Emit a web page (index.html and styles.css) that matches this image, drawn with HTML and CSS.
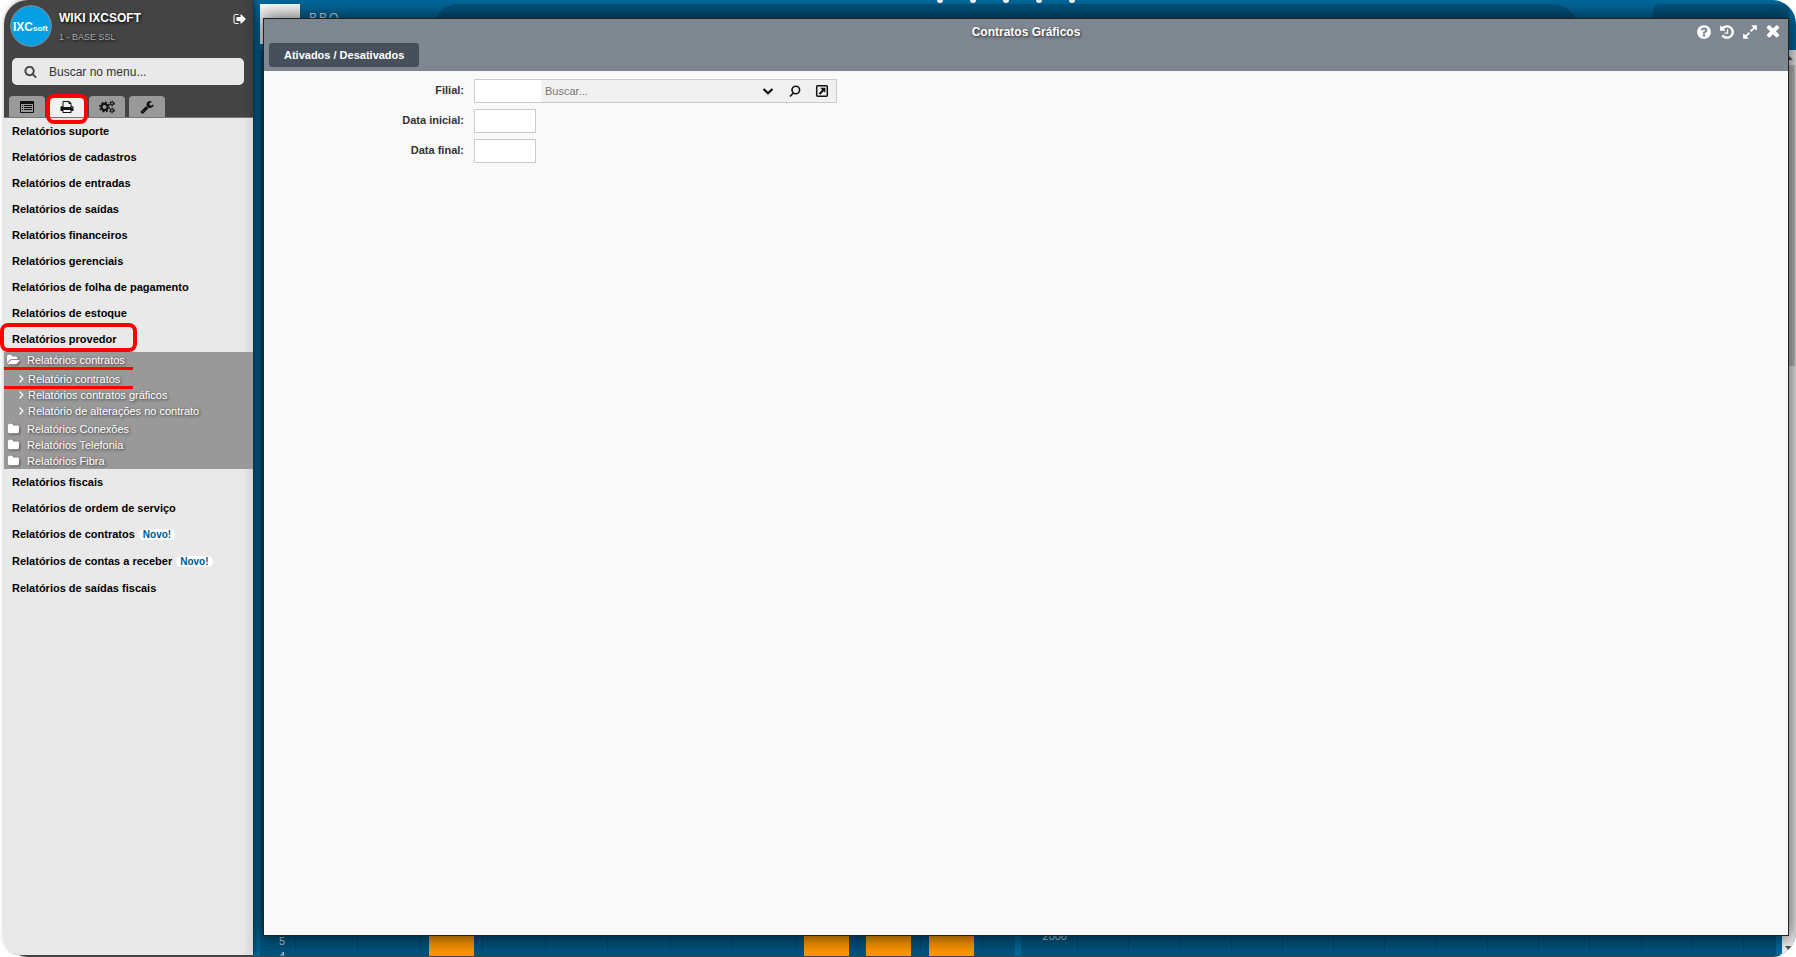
FILE: index.html
```
<!DOCTYPE html>
<html lang="pt-BR">
<head>
<meta charset="utf-8">
<title>Contratos Gráficos</title>
<link rel="stylesheet" href="styles.css">
</head>
<body>
<svg class="defs" aria-hidden="true">
  <symbol id="folder" viewBox="0 0 1792 1792"><path d="M1728 608v704q0 92-66 158t-158 66h-1216q-92 0-158-66t-66-158v-960q0-92 66-158t158-66h320q92 0 158 66t66 158v32h672q92 0 158 66t66 158z"/></symbol>
  <symbol id="angle" viewBox="0 0 8 12"><path d="M2.500 2.500l3.300 3.500-3.300 3.500" fill="none" stroke="currentColor" stroke-width="1.200"/></symbol>
</svg>
<div class="app">
  <aside class="sidebar">
    <header class="side-head">
      <div class="user">
        <svg class="logo" viewBox="0 0 42 42" role="img" aria-label="IXCsoft"><circle cx="21" cy="21" r="20.3" fill="#079fe4" stroke="#8a8f92"/><text x="3" y="25.5" class="logo-big">IXC</text><text x="23" y="26" class="logo-small">soft</text></svg>
        <div class="who"><strong>WIKI IXCSOFT</strong><span>1 - BASE SSL</span></div>
        <button class="icon-btn exit" aria-label="Sair"><svg viewBox="0 0 1792 1792"><path d="M704 1440q0 4 1 20t.5 26.5-3 23.5-10 19.5-20.5 6.5h-320q-119 0-203.5-84.5t-84.5-203.5v-704q0-119 84.5-203.5t203.5-84.5h320q13 0 22.5 9.5t9.5 22.5q0 4 1 20t.5 26.5-3 23.5-10 19.5-20.5 6.5h-320q-66 0-113 47t-47 113v704q0 66 47 113t113 47h312l11.5 1 11.5 3 8 5.5 7 9 2 13.5zm928-544q0 26-19 45l-544 544q-19 19-45 19t-45-19-19-45v-288h-448q-26 0-45-19t-19-45v-384q0-26 19-45t45-19h448v-288q0-26 19-45t45-19 45 19l544 544q19 19 19 45z"/></svg></button>
      </div>
      <label class="search">
        <svg viewBox="0 0 1792 1792" aria-hidden="true"><path d="M1216 832q0-185-131.5-316.5t-316.5-131.5-316.5 131.5-131.5 316.5 131.5 316.5 316.5 131.5 316.5-131.5 131.5-316.5zm512 832q0 52-38 90t-90 38q-54 0-90-38l-343-342q-179 124-399 124-143 0-273.5-55.5t-225-150-150-225-55.5-273.5 55.5-273.5 150-225 225-150 273.5-55.5 273.5 55.5 225 150 150 225 55.5 273.5q0 220-124 399l343 343q37 37 37 90z"/></svg>
        <input type="text" placeholder="Buscar no menu..." aria-label="Buscar no menu">
      </label>
      <nav class="tabs">
        <button aria-label="Menu"><svg viewBox="0 0 14 14"><path fill-rule="evenodd" d="M1 1h12a1 1 0 011 1v10a1 1 0 01-1 1H1a1 1 0 01-1-1V2a1 1 0 011-1zm0 3v8h12V4zM2 5h1v1H2zm2 0h8v1H4zM2 7h1v1H2zm2 0h8v1H4zM2 9h1v1H2zm2 0h8v1H4z"/></svg></button>
        <button class="active marked" aria-label="Relatórios"><svg viewBox="0 0 1792 1792"><path d="M448 1536h896v-256h-896v256zm0-640h896v-384h-160q-40 0-68-28t-28-68v-160h-640v640zm1152 64q0-26-19-45t-45-19-45 19-19 45 19 45 45 19 45-19 19-45zm128 0v416q0 13-9.500 22.500t-22.500 9.500h-224v160q0 40-28 68t-68 28h-960q-40 0-68-28t-28-68v-160h-224q-13 0-22.500-9.500t-9.500-22.500v-416q0-79 56.500-135.500t135.500-56.500h64v-544q0-40 28-68t68-28h672q40 0 88 20t76 48l152 152q28 28 48 76t20 88v256h64q79 0 135.500 56.500t56.500 135.500z"/></svg></button>
        <button aria-label="Configurações"><svg class="cogs" viewBox="0 0 16 14"><g fill="none" stroke="currentColor"><circle cx="5.500" cy="7" r="3.100" stroke-width="2.200"/><circle cx="5.500" cy="7" r="4.700" stroke-width="1.500" stroke-dasharray="1.850 1.840"/><circle cx="13" cy="3.500" r="1.500" stroke-width="1.200"/><circle cx="13" cy="3.500" r="2.400" stroke-dasharray="1.260 1.250"/><circle cx="13" cy="10.500" r="1.500" stroke-width="1.200"/><circle cx="13" cy="10.500" r="2.400" stroke-dasharray="1.260 1.250"/></g></svg></button>
        <button aria-label="Ferramentas"><svg viewBox="0 0 1792 1792"><path d="M448 1472q0-26-19-45t-45-19-45 19-19 45 19 45 45 19 45-19 19-45zm644-420l-682 682q-37 37-90 37-52 0-91-37l-106-108q-38-36-38-90 0-53 38-91l681-681q39 98 114.500 173.500t173.500 114.500zm634-435q0 39-23 106-47 134-164.500 217.500t-258.500 83.500q-185 0-316.500-131.500t-131.500-316.500 131.500-316.500 316.500-131.500q58 0 121.500 16.500t107.500 46.500q16 11 16 28t-16 28l-293 169v224l193 107q5-3 79-48.500t135.500-81 70.500-35.500q15 0 23.500 10t8.500 25z"/></svg></button>
      </nav>
    </header>
    <ul class="menu">
      <li><a href="#">Relatórios suporte</a></li>
      <li><a href="#">Relatórios de cadastros</a></li>
      <li><a href="#">Relatórios de entradas</a></li>
      <li><a href="#">Relatórios de saídas</a></li>
      <li><a href="#">Relatórios financeiros</a></li>
      <li><a href="#">Relatórios gerenciais</a></li>
      <li><a href="#">Relatórios de folha de pagamento</a></li>
      <li><a href="#">Relatórios de estoque</a></li>
      <li><a href="#" class="boxed">Relatórios provedor</a>
        <ul class="submenu">
          <li><a href="#" class="folder underlined"><svg viewBox="0 0 1792 1792"><path d="M1815 952q0 31-31 66l-336 396q-43 51-120.500 86.500t-143.500 35.500h-1088q-34 0-60.500-13t-26.500-43q0-31 31-66l336-396q43-51 120.500-86.500t143.500-35.500h1088q34 0 60.500 13t26.500 43zm-343-344v160h-832q-94 0-197 47.500t-164 119.500l-337 396-5 6q0-4-.5-12.500t-.5-12.500v-960q0-92 66-158t158-66h320q92 0 158 66t66 158v32h544q92 0 158 66t66 158z"/></svg>Relatórios contratos</a>
            <ul class="leafs">
              <li><a href="#" class="leaf underlined"><svg><use href="#angle"/></svg>Relatório contratos</a></li>
              <li><a href="#" class="leaf"><svg><use href="#angle"/></svg>Relatórios contratos gráficos</a></li>
              <li><a href="#" class="leaf"><svg><use href="#angle"/></svg>Relatório de alterações no contrato</a></li>
            </ul>
          </li>
          <li><a href="#" class="folder"><svg><use href="#folder"/></svg>Relatórios Conexões</a></li>
          <li><a href="#" class="folder"><svg><use href="#folder"/></svg>Relatórios Telefonia</a></li>
          <li><a href="#" class="folder"><svg><use href="#folder"/></svg>Relatórios Fibra</a></li>
        </ul>
      </li>
      <li><a href="#">Relatórios fiscais</a></li>
      <li><a href="#">Relatórios de ordem de serviço</a></li>
      <li><a href="#" class="new">Relatórios de contratos <span>Novo!</span></a></li>
      <li><a href="#" class="new">Relatórios de contas a receber <span>Novo!</span></a></li>
      <li><a href="#">Relatórios de saídas fiscais</a></li>
    </ul>
  </aside>
  <main class="desktop">
    <div class="topbar">
      <div class="avatar"></div>
      <div class="city">BBO —</div>
      <div class="banner"><i></i><i></i><i></i><i></i><i></i></div>
      <div class="corner"></div>
    </div>
    <div class="board">
      <section class="chart first">
        <div class="axis"><span>5</span><span>4</span></div>
        <div class="plot"><b></b><b></b><b class="bar"></b><b></b><b></b><b></b><b></b><b></b><b class="bar"></b><b class="bar"></b><b class="bar"></b></div>
      </section>
      <section class="chart second">
        <div class="axis"><span>2000</span></div>
        <div class="plot"><b></b><b></b><b></b><b></b><b></b><b></b><b></b><b></b><b></b><b></b><b></b><b></b><b></b></div>
      </section>
      <div class="scroll"><svg viewBox="0 0 14 15"><path d="M3 10l4-4 4 4z"/></svg><div class="thumb"></div><svg class="down" viewBox="0 0 14 15"><path d="M3 5h8l-4 5z"/></svg></div>
    </div>
    <section class="window">
      <header class="titlebar">
        <div class="title-row">
          <h1>Contratos Gráficos</h1>
          <div class="controls">
            <button class="icon-btn" aria-label="Ajuda"><svg viewBox="0 0 1792 1792"><path d="M1024 1376v-192q0-14-9-23t-23-9h-192q-14 0-23 9t-9 23v192q0 14 9 23t23 9h192q14 0 23-9t9-23zm256-672q0-88-55.500-163t-138.500-116-170-41q-243 0-371 213-15 24 8 42l132 100q7 6 19 6 16 0 25-12 53-68 86-92 34-24 86-24 48 0 85.500 26t37.500 59q0 38-20 61t-68 45q-63 28-115.500 86.500t-52.500 125.500v36q0 14 9 23t23 9h192q14 0 23-9t9-23q0-19 21.500-49.500t54.500-49.500q32-18 49-28.500t46-35 44.500-48 28-60.500 12.500-81zm384 192q0 209-103 385.500t-279.500 279.500-385.500 103-385.500-103-279.500-279.500-103-385.500 103-385.500 279.500-279.500 385.500-103 385.500 103 279.500 279.500 103 385.500z"/></svg></button>
            <button class="icon-btn" aria-label="Histórico"><svg viewBox="0 0 1792 1792"><path d="M1664 896q0 156-61 298t-164 245-245 164-298 61q-172 0-327-72.500t-264-204.500q-7-10-6.500-22.500t8.500-20.500l137-138q10-9 25-9 16 2 23 12 73 95 179 147t225 52q104 0 198.500-40.500t163.500-109.500 109.500-163.500 40.500-198.500-40.500-198.500-109.500-163.500-163.500-109.500-198.500-40.500q-98 0-188 35.500t-160 101.500l137 138q31 30 14 69-17 40-59 40h-448q-26 0-45-19t-19-45v-448q0-42 40-59 39-17 69 14l130 129q107-101 244.500-156.500t284.500-55.500q156 0 298 61t245 164 164 245 61 298zm-640-288v448q0 14-9 23t-23 9h-320q-14 0-23-9t-9-23v-64q0-14 9-23t23-9h224v-352q0-14 9-23t23-9h64q14 0 23 9t9 23z"/></svg></button>
            <button class="icon-btn" aria-label="Expandir"><svg viewBox="0 0 1792 1792"><path d="M883 1056q0 13-10 23l-332 332 144 144q19 19 19 45t-19 45-45 19h-448q-26 0-45-19t-19-45v-448q0-26 19-45t45-19 45 19l144 144 332-332q10-10 23-10t23 10l114 114q10 10 10 23zm781-864v448q0 26-19 45t-45 19-45-19l-144-144-332 332q-10 10-23 10t-23-10l-114-114q-10-10-10-23t10-23l332-332-144-144q-19-19-19-45t19-45 45-19h448q26 0 45 19t19 45z"/></svg></button>
            <button class="icon-btn" aria-label="Fechar"><svg viewBox="128 256 1536 1536"><path d="M1490 1322q0 40-28 68l-136 136q-28 28-68 28t-68-28l-294-294-294 294q-28 28-68 28t-68-28l-136-136q-28-28-28-68t28-68l294-294-294-294q-28-28-28-68t28-68l136-136q28-28 68-28t68 28l294 294 294-294q28-28 68-28t68 28l136 136q28 28 28 68t-28 68l-294 294 294 294q28 28 28 68z"/></svg></button>
          </div>
        </div>
        <button class="report-tab">Ativados / Desativados</button>
      </header>
      <form class="form">
        <label for="filial">Filial:</label>
        <div class="lookup">
          <input id="filial" type="text" class="code">
          <input type="text" class="name" placeholder="Buscar..." aria-label="Buscar filial">
          <button type="button" aria-label="Abrir lista"><svg viewBox="0 0 14 14"><path d="M2.500 5l4.500 4.300L11.500 5" fill="none" stroke="currentColor" stroke-width="2.200"/></svg></button>
          <button type="button" aria-label="Pesquisar"><svg viewBox="0 0 14 14"><g fill="none" stroke="currentColor" stroke-width="1.600"><circle cx="7.800" cy="6" r="3.800"/><path d="M5.300 9L2 12.500"/></g></svg></button>
          <button type="button" aria-label="Abrir cadastro"><svg viewBox="0 0 14 14"><rect x="1.700" y="1.700" width="10.600" height="10.600" rx="1" fill="none" stroke="currentColor" stroke-width="1.500"/><path d="M5.300 3.800h5v5L8.700 7.200 5.200 10.800 3.700 9.500 7 5.800z"/></svg></button>
        </div>
        <label for="inicio">Data inicial:</label>
        <input id="inicio" type="text" class="date">
        <label for="fim">Data final:</label>
        <input id="fim" type="text" class="date">
      </form>
    </section>
  </main>
</div>
</body>
</html>
```
FILE: styles.css
```
* { box-sizing: border-box; }
html { height: 100%; }
body {
  margin: 0;
  height: 100%;
  padding-left: 4px;
  background: #fff;
  font: 11px "Liberation Sans", Arial, sans-serif;
  color: #000;
}
button, input { font: inherit; color: inherit; margin: 0; padding: 0; border: 0; background: none; outline: 0; }
button { display: flex; align-items: center; justify-content: center; cursor: pointer; }
svg { display: block; fill: currentColor; }
ul { list-style: none; margin: 0; padding: 0; }
a { color: inherit; text-decoration: none; }
.defs { position: absolute; width: 0; height: 0; }

.app {
  display: grid;
  grid-template-columns: 249px 1fr;
  height: 100%;
  background: linear-gradient(#444, #444) 14px 100% / 100% 2px no-repeat;
  border-radius: 24px;
}

/* Sidebar */
.sidebar {
  position: relative;
  z-index: 1;
  margin-bottom: 2px;
  background: linear-gradient(to left, #d6d6d6, #e9e9e9 10px);
  border-radius: 24px 0 0 20px;
  box-shadow: 2px 0 6px rgba(0, 0, 0, .5);
  clip-path: inset(0 -8px 0 -4px);
}
.side-head { background: linear-gradient(to left, #3b3b3b, #444 10px); border-bottom: 1px solid #777; border-radius: 24px 0 0 0; }
.user { display: flex; padding: 5px 6px 0; height: 58px; }
.logo { width: 42px; height: 42px; flex: none; }
.logo-big { font: bold 12px "Liberation Sans", Arial, sans-serif; fill: #fff; }
.logo-small { font: bold 8px "Liberation Sans", Arial, sans-serif; fill: #fff; }
.who { flex: 1; padding: 5px 0 0 7px; color: #fff; text-shadow: 1px 1px 3px #000; }
.who strong { display: block; font-size: 12px; line-height: 16px; }
.who span { display: block; margin-top: 6px; font-size: 9px; line-height: 10px; color: #aaa; }
.exit { height: 14px; margin-top: 7px; color: #fff; }
.exit svg { width: 14px; height: 14px; }
.search { display: flex; align-items: center; height: 27px; margin: 0 9px 0 8px; padding-left: 12px; gap: 12px; background: #e9e9e9; border-radius: 5px; color: #444; font-size: 12px; }
.search svg { width: 13px; height: 13px; }
.search input { flex: 1; }
.search input::placeholder { color: #333; opacity: 1; }
.tabs { display: flex; gap: 4px; padding: 11px 0 0 5px; }
.tabs button { position: relative; width: 36px; height: 21px; background: #999; border-radius: 4px 4px 0 0; color: #111; }
.tabs svg { width: 14px; height: 14px; }
.tabs .cogs { width: 16px; }
.tabs .active { background: #f0f0f0; }
.marked::after, .boxed::after { content: ""; position: absolute; border: 4px solid #f00; border-radius: 8px; }
.marked::after { inset: -2px -3px -7px -3px; }

.menu a { display: flex; align-items: center; position: relative; height: 26px; padding-left: 8px; font-weight: bold; }
.menu .boxed { z-index: 1; }
.boxed::after { inset: -3px 116px 0 -4px; }
.menu .new { height: 27px; padding-bottom: 1px; }
.new span { margin-left: 4px; padding: 0 4px; border-radius: 6px; background: #fff; color: #00578a; font-size: 10px; line-height: 11px; }
.submenu { background: #999; text-shadow: 1px 1px 3px #333; }
.menu .submenu a { height: 16px; font-weight: normal; color: #fff; }
.menu .folder { padding-left: 3px; gap: 7px; }
.folder svg { width: 13px; height: 13px; padding-bottom: 1px; filter: drop-shadow(1px 1px 1px #555); }
.menu .leaf { padding-left: 13px; gap: 3px; }
.leaf svg { width: 8px; height: 12px; }
.leafs { padding: 3px 0 2px; }
.underlined::after { content: ""; position: absolute; left: 0; right: 120px; top: 15px; height: 3px; background: #f00; }

/* Desktop behind the window */
.desktop { position: relative; display: flex; flex-direction: column; min-width: 0; margin-bottom: 1px; background: #00689c; border-radius: 0 24px 24px 0; overflow: hidden; }
.topbar { display: flex; height: 50px; padding: 0 7px; flex: none; }
.avatar { width: 40px; height: 40px; margin-top: 4px; background: #fff; }
.city { width: 134px; padding: 11px 0 0 9px; font-size: 12px; line-height: 14px; letter-spacing: 2px; color: #d5e6ef; }
.banner { display: flex; justify-content: center; gap: 27px; flex: 1; height: 46px; margin-top: 4px; margin-right: 76px; background: #00547f; border-radius: 24px 24px 0 0; }
.banner i { width: 6px; height: 4px; margin-top: -5px; border-radius: 0 0 3px 3px; background: #fff; }
.corner { width: 136px; margin-top: 4px; background: #00547f; border-radius: 6px; }
.board { display: grid; grid-template-columns: 1fr 1fr 14px; gap: 6px; flex: 1; min-height: 0; padding-left: 7px; }
.chart { display: flex; background: #00547f; padding-right: 32px; }
.axis { display: flex; flex-direction: column; justify-content: flex-end; align-items: flex-end; width: 35px; padding-right: 10px; color: #bcd3df; line-height: 15px; margin-bottom: -8px; }
.second .axis { width: 56px; padding-right: 10px; margin-bottom: 12px; }
.plot { display: flex; flex: 1; border-right: 1px solid #004a70; }
.plot b { display: flex; align-items: flex-end; justify-content: center; flex: 1; border-left: 1px solid #004a70; }
.bar::before { content: ""; width: 45px; height: 200px; background: #ff9900; }
.scroll { display: flex; flex-direction: column; background: #f1f1f1; color: #505050; }
.scroll svg { width: 14px; height: 15px; }
.thumb { height: 301px; background: #c1c1c1; margin-right: 1px; }
.scroll .down { margin-top: auto; }

/* Window */
.window { position: absolute; inset: 18px 7px 20px 10px; display: flex; flex-direction: column; background: #f9f9f9; border: 1px solid #222; box-shadow: 0 0 18px 2px rgba(0, 0, 0, .65); }
.titlebar { padding-bottom: 4px; background: #7e8790; color: #fff; }
.title-row { display: grid; grid-template-columns: 1fr auto 1fr; align-items: center; height: 24px; padding-top: 2px; }
.title-row h1 { grid-column: 2; margin: 0; font-size: 12px; line-height: 14px; text-shadow: 1px 1px 3px #222; }
.controls { display: flex; justify-content: flex-end; gap: 7px; padding-right: 7px; }
.controls svg { width: 16px; height: 16px; }
.report-tab { height: 24px; margin-left: 5px; padding: 0 15px; border-radius: 3px; background: #464f5a; font-weight: bold; }
.form { display: grid; grid-template-columns: 200px 1fr; column-gap: 10px; row-gap: 6px; padding-top: 8px; color: #333; }
.form label { text-align: right; font-weight: bold; line-height: 22px; }
.lookup { display: flex; width: 363px; height: 24px; border: 1px solid #ccc; background: #f1f1f1; }
.code { width: 66px; background: #fff; }
.name { flex: 1; min-width: 0; padding-left: 4px; }
.name::placeholder { color: #777; opacity: 1; }
.lookup button { width: 27px; color: #111; }
.lookup button:last-child { margin-right: 1px; }
.lookup svg { width: 14px; height: 14px; }
.date { width: 62px; height: 24px; border: 1px solid #ccc; background: #fff; }
```
